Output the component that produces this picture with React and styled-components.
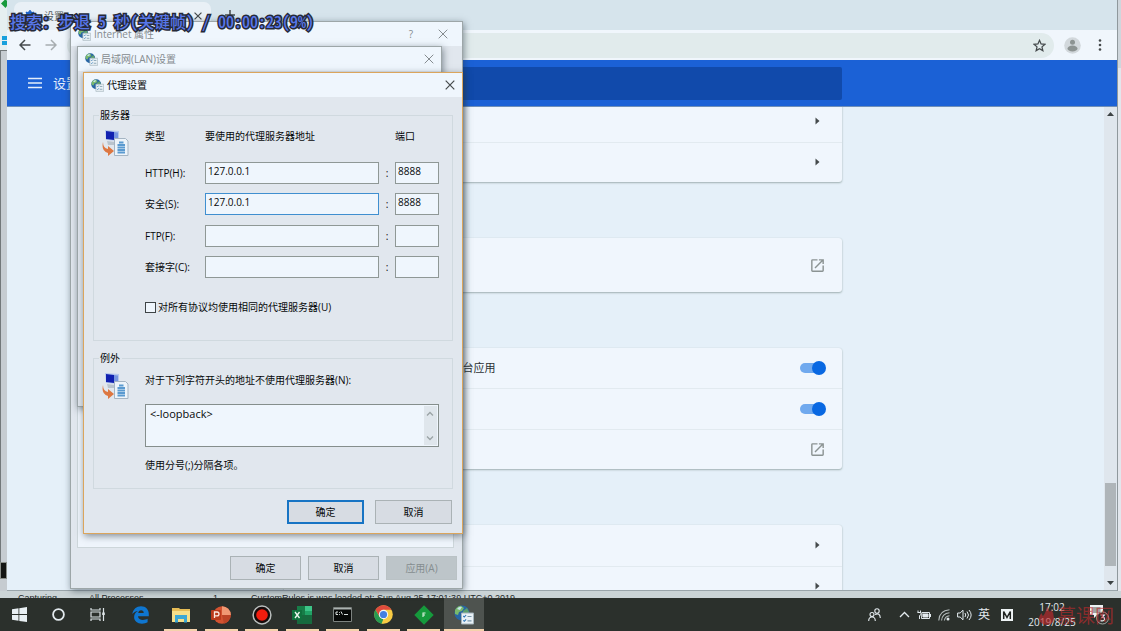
import React from "react";
import styled, { createGlobalStyle, css } from "styled-components";

const GlobalStyle = createGlobalStyle`
  *, *::before, *::after { box-sizing: border-box; }
  html, body { margin: 0; padding: 0; }
  body {
    font-family: "Open Sans", "Noto Sans CJK SC", sans-serif;
    font-size: 10px;
    line-height: 14px;
    color: #060809;
    overflow: hidden;
  }
  button, input, textarea { font: inherit; color: inherit; margin: 0; border-radius: 0; }
  button { padding: 0; border: 0; background: none; }
  svg { display: block; }
`;

/* ---------- desktop ---------- */

const Desktop = styled.div`
  position: relative;
  display: flex;
  flex-direction: column;
  height: 100vh;
  overflow: hidden;
  background: #c8d0d4;
`;

const Workspace = styled.div`
  flex: 1;
  min-height: 0;
  display: flex;
`;

const LeftEdge = styled.div`
  width: 7px;
  flex: none;
  display: flex;
  flex-direction: column;
  background: #c6ccd1;
  overflow: hidden;
`;

const LeftTop = styled.div`
  height: 51px;
  background: #e6eff0;
  border-bottom: 1px solid #72787a;
`;

const LeftMiddle = styled.div`
  flex: 1;
  border-left: 1px solid #72787a;
`;

const LeftBottom = styled.div`
  height: 17px;
  margin-bottom: 12px;
  background: #141614;
  border: 1px solid #8a8f8a;
`;

const RightEdge = styled.div`
  width: 4px;
  flex: none;
  background: linear-gradient(#cfd6dc 0 68px, #e2e6ec 68px);
  border-left: 1px solid #8f989c;
`;

const StatusBar = styled.div`
  display: grid;
  grid-template-columns: 14px 71px 124px 38px 1fr;
  align-items: end;
  height: 7px;
  padding: 0 0 3px 4px;
  overflow: hidden;
  background: #cbd4d6;
  font: 9px/14px "Liberation Sans", sans-serif;
  color: #24292a;
`;

/* ---------- browser ---------- */

const Browser = styled.main`
  flex: 1;
  min-width: 0;
  display: flex;
  flex-direction: column;
  background: #e5f0f9;
  border-bottom: 1px solid #9aa5aa;
`;

const TabStrip = styled.div`
  display: flex;
  align-items: flex-end;
  gap: 13px;
  height: 30px;
  flex: none;
  padding-left: 7px;
  background: #d6e4ec;
`;

const Tab = styled.div`
  display: flex;
  align-items: center;
  gap: 8px;
  width: 197px;
  height: 28px;
  padding: 0 8px 0 10px;
  border-radius: 7px 7px 0 0;
  background: #e9f0f6;
  color: #545b60;
`;

const TabTitle = styled.span`
  flex: 1;
`;

const PlainButton = styled.button`
  display: flex;
  align-items: center;
  justify-content: center;
  width: ${(p) => p.$w || 12}px;
  height: ${(p) => p.$h || 12}px;
  color: ${(p) => p.$color || "#454a4c"};
`;

const Toolbar = styled.div`
  display: flex;
  align-items: center;
  height: 30px;
  flex: none;
  padding: 0 4px 0 8px;
  gap: 6px;
  background: #f0f6fc;
`;

const Omnibox = styled.div`
  flex: 1;
  display: flex;
  align-items: center;
  justify-content: flex-end;
  height: 25px;
  margin-right: 4px;
  padding-right: 7px;
  border-radius: 13px;
  background: #e1ebec;
`;

const SettingsHeader = styled.header`
  display: grid;
  grid-template-columns: 1fr 558px 1fr;
  align-items: center;
  height: 47px;
  flex: none;
  padding-left: 2px;
  background: #1b61d6;
  border-bottom: 1px solid #6f8fb8;
`;

const HeaderTitle = styled.div`
  display: flex;
  align-items: center;
  gap: 11px;
  padding-left: 19px;
  color: #e4eefb;
  font-size: 13px;
  line-height: 18px;
`;

const SearchField = styled.input`
  width: 100%;
  height: 33px;
  border: 0;
  padding: 0 12px;
  border-radius: 2px;
  background: #114aab;
`;

const Page = styled.div`
  flex: 1;
  min-height: 0;
  display: flex;
`;

const PageContent = styled.div`
  flex: 1;
  display: flex;
  flex-direction: column;
  align-items: center;
  gap: 56px;
  padding-left: 14px;
  overflow: hidden;
`;

const Card = styled.section`
  display: grid;
  grid-auto-rows: 1fr;
  flex: none;
  width: 558px;
  height: ${(p) => p.$height}px;
  border-radius: 3px;
  background: #f0f6fd;
  box-shadow: 0 1px 2px #9fb0b2, 0 0 1px #c5d2d6;
  &:first-child { margin-top: -6px; }
`;

const CardRow = styled.div`
  display: flex;
  align-items: center;
  justify-content: flex-end;
  padding-right: ${(p) => (p.$icon ? 15 : 16)}px;
  color: #2c3134;
  font-size: 11px;
  & + & { border-top: 1px solid #e2eaf0; }
`;

const RowLabel = styled.label`
  width: 212px;
  margin-right: auto;
  text-align: right;
`;

const Switch = styled.input`
  appearance: none;
  position: relative;
  width: 26px;
  height: 14px;
  &::before {
    content: "";
    position: absolute;
    inset: 2px 4px 2px 0;
    border-radius: 5px;
    background: #70a9ee;
  }
  &::after {
    content: "";
    position: absolute;
    right: 0;
    top: 0;
    width: 14px;
    height: 14px;
    border-radius: 50%;
    background: #0968e2;
  }
`;

const ScrollTrack = styled.div`
  display: flex;
  flex-direction: column;
  align-items: center;
  width: 13px;
  padding: 5px 0;
  background: #dfe6ed;
  color: #3c4244;
`;

const ScrollSpace = styled.div`
  flex: 1;
`;

const ScrollThumb = styled.div`
  width: 11px;
  height: 83px;
  margin-bottom: 15px;
  background: #afb5b9;
`;

/* ---------- dialogs ---------- */

const Dialog = styled.section`
  position: absolute;
  display: flex;
  flex-direction: column;
  border: 1px solid #9da6a8;
  background: #e1e7ee;
  box-shadow: 1px 2px 7px rgba(40, 55, 65, 0.55);
`;

const InternetDialog = styled(Dialog)`
  left: 70px;
  top: 21px;
  width: 393px;
  height: 568px;
`;

const LanDialog = styled(Dialog)`
  left: 77px;
  top: 46px;
  width: 365px;
  height: 361px;
`;

const ProxyDialog = styled(Dialog)`
  left: 83px;
  top: 72px;
  width: 380px;
  border-color: #dba55c;
`;

const TitleBar = styled.header`
  display: flex;
  align-items: center;
  gap: 3px;
  height: 24px;
  flex: none;
  padding: 0 ${(p) => p.$right || 6}px 0 7px;
  background: #eff6fd;
  color: ${(p) => (p.$active ? "#060809" : "#858b8f")};
`;

const DialogTitle = styled.h2`
  flex: 1;
  margin: 0;
  font-size: 10px;
  font-weight: 400;
`;

const TabPanel = styled.div`
  flex: 1;
  margin: 40px 8px 0 6px;
  border: 1px solid #cdd6da;
  background: #eff5fc;
`;

const ButtonRow = styled.footer`
  display: flex;
  justify-content: flex-end;
  gap: ${(p) => p.$gap}px;
  padding: ${(p) => p.$padding};
`;

const DialogButton = styled.button`
  width: ${(p) => p.$width}px;
  height: 24px;
  border: 1px solid #aab2b5;
  background: #d7dce3;
  text-align: center;
  ${(p) => p.$primary && css`border: 2px solid #1774c4;`}
  &:disabled {
    border-color: #bac2c5;
    background: #bdc5c9;
    color: #858d8f;
  }
`;

const ProxyBody = styled.form`
  display: flex;
  flex-direction: column;
  padding: 11px 9px 0;
`;

const Group = styled.fieldset`
  display: grid;
  grid-template-columns: 46px 1fr;
  align-content: start;
  min-width: 0;
  height: ${(p) => p.$height}px;
  margin: 0 0 10px;
  padding: 0 13px 0 5px;
  border: 1px solid #d0d9df;
`;

const Legend = styled.legend`
  padding: 0 2px 0 1px;
`;

const IconCell = styled.div`
  padding: 7px 0 0 3px;
`;

const GroupContent = styled.div`
  display: flex;
  flex-direction: column;
  padding-top: ${(p) => p.$top}px;
`;

const ServerGrid = styled.div`
  display: grid;
  grid-template-columns: 60px 174px 16px 44px;
  align-items: center;
  align-content: space-between;
  height: ${(p) => p.$height}px;
`;

const Colon = styled.span`
  text-align: center;
`;

const TextField = styled.input`
  width: 100%;
  height: 22px;
  min-width: 0;
  padding: 0 3px 4px 2px;
  border: 1px solid #8f9896;
  background: #eff6fd;
  outline: 0;
  ${(p) => p.$focused && css`border-color: #3f8fd0;`}
`;

const CheckLabel = styled.label`
  display: flex;
  align-items: center;
  gap: 2px;
  margin-top: 22px;
`;

const CheckBox = styled.input`
  appearance: none;
  width: 11px;
  height: 11px;
  border: 1px solid #3e4446;
  background: #eff6fd;
`;

const BypassBox = styled.div`
  display: flex;
  height: 43px;
  margin: 17px 0 11px;
  border: 1px solid #858e8c;
  background: #eff6fd;
`;

const BypassText = styled.textarea`
  flex: 1;
  min-width: 0;
  padding: 2px 4px;
  border: 0;
  outline: 0;
  resize: none;
  overflow: hidden;
  background: none;
  font-size: 11px;
`;

const BypassScroll = styled.div`
  display: flex;
  flex-direction: column;
  justify-content: space-between;
  width: 13px;
  margin: 1px;
  background: #dfe6ec;
`;

/* ---------- taskbar ---------- */

const Taskbar = styled.nav`
  display: flex;
  align-items: stretch;
  height: 33px;
  flex: none;
  background: #2b302c;
  color: #e3eaee;
`;

const SystemButtons = styled.div`
  display: flex;
  margin-right: 3px;
`;

const AppButtons = styled.div`
  display: flex;
  justify-content: space-between;
  width: 364px;
`;

const TaskButton = styled.button`
  display: flex;
  align-items: center;
  justify-content: center;
  width: ${(p) => p.$width || 40}px;
  background: ${(p) => (p.$active ? "#4e534f" : "none")};
  ${(p) => p.$running && css`
    background-image: linear-gradient(#f4d2ac, #f4d2ac);
    background-repeat: no-repeat;
    background-position: center bottom;
    background-size: ${p.$active ? "40px" : "33px"} 2px;
  `}
`;

const Tray = styled.div`
  display: flex;
  align-items: center;
  margin-left: auto;
  padding-right: 7px;
`;

const TrayButton = styled.button`
  display: flex;
  align-items: center;
  justify-content: center;
  width: ${(p) => p.$width || 20}px;
  height: 33px;
  color: #e3eaee;
  font-size: 12px;
`;

const Clock = styled.time`
  width: 64px;
  text-align: center;
  line-height: 15px;
`;

const Watermark = styled.div`
  position: absolute;
  right: 7px;
  bottom: 4px;
  display: flex;
  align-items: center;
  gap: 3px;
  color: rgba(190, 42, 44, 0.65);
  font: 19px/24px "Noto Sans CJK SC", sans-serif;
`;

const PlayerMessage = styled.div`
  position: absolute;
  left: 10px;
  top: 9px;
  font: 500 16px/24px "Noto Sans CJK SC", sans-serif;
  font-feature-settings: "hwid";
  white-space: pre;
  color: #5877ea;
  -webkit-text-stroke: 3px #262a38;
  paint-order: stroke fill;
`;

/* ---------- drawings ---------- */

const CloseIcon = ({ size = 10, width = 1 }) => (
  <svg width={size} height={size} viewBox="0 0 10 10" fill="none" stroke="currentColor" strokeWidth={width}>
    <path d="M.7.7l8.6 8.6M9.3.7L.7 9.3" />
  </svg>
);

const GlobeIcon = ({ size = 13 }) => (
  <svg width={size} height={size} viewBox="0 0 20 20">
    <circle cx="8" cy="8" r="7.6" fill="#2866a4" />
    <path d="M1 5Q3 1 7 .8L10 3 8 6 5 7 4 10 1 9z" fill="#79b96b" />
    <path d="M9 6l4-3 2 4-3 5-3-2z" fill="#5b9f6d" />
    <path d="M3 4q2-3 5-2l-2 3z" fill="#c5e3ec" />
    <path d="M7.500 8h12v11h-12z" fill="#e9f1f6" stroke="#a3b2ba" strokeWidth="1" />
    <path d="M9.300 11l1 1 1.800-2M9.300 15.300l1 1 1.800-2" fill="none" stroke="#2873b5" strokeWidth="1.100" />
    <path d="M13.500 11.500h4M13.500 15.800h4" stroke="#7896a9" strokeWidth="1.200" />
  </svg>
);

const ServerIcon = () => (
  <svg width="27" height="28" viewBox="0 0 27 28">
    <path d="M3 1l14 1v10L4 11z" fill="#b5c8ed" />
    <path d="M4 2l8 1v8l-8-1z" fill="#1020b0" />
    <path d="M12 3l4 .5v7.500l-4-1z" fill="#7796e0" />
    <path d="M5 12l8 1v3H6z" fill="#b9c4ce" />
    <path d="M12.500 9.500h11l2.500 2.500v14.500h-13.500z" fill="#edf4fa" stroke="#a5b5c3" />
    <path d="M17 13.500h4.500M15.500 16h7.500M15.500 18.500h7.500M15.500 21h7.500M15.500 23.500h7.500" stroke="#5a9ad0" strokeWidth="1.800" />
    <path d="M1 13q0 6 5 7v-3l6 5-6 5v-3Q-1 22 1 13z" fill="#dd7741" />
  </svg>
);

const Triangle = ({ d, w = 7, h = 7 }) => (
  <svg width={w} height={h} viewBox={`0 0 ${w} ${h}`} fill="currentColor"><path d={d} /></svg>
);

const ArrowRight = () => <Triangle w={5} h={8} d="M.5.5L4.500 4 .5 7.500z" />;

const LaunchIcon = () => (
  <svg width="17" height="17" viewBox="0 0 24 24" fill="#8b9393">
    <path d="M19 19H5V5h7V3H5a2 2 0 0 0-2 2v14a2 2 0 0 0 2 2h14a2 2 0 0 0 2-2v-7h-2v7zM14 3v2h3.590l-9.830 9.830 1.410 1.410L19 6.410V10h2V3h-7z" />
  </svg>
);

const NavArrow = ({ back }) => (
  <svg width="12" height="12" viewBox="0 0 12 12" fill="none" stroke="currentColor" strokeWidth="1.500">
    <path d={back ? "M11.500 6H1M6 1L1 6l5 5" : "M.5 6H11M6 1l5 5-5 5"} />
  </svg>
);

const Chevron = ({ up }) => (
  <svg width="8" height="6" viewBox="0 0 8 6" fill="none" stroke="#9aa3a5" strokeWidth="1.300">
    <path d={up ? "M1 4.500l3-3 3 3" : "M1 1.500l3 3 3-3"} />
  </svg>
);

const WindowsIcon = () => (
  <svg width="15" height="15" viewBox="0 0 15 15" fill="#e8eff3">
    <path d="M0 2.200l6.500-.9v5.800H0zM7.300 1.200L15 0v7.100H7.300zM0 7.900h6.500v5.800L0 12.800zM7.300 7.900H15V15l-7.700-1.100z" />
  </svg>
);

const TaskViewIcon = () => (
  <svg width="15" height="15" viewBox="0 0 15 15" fill="none" stroke="#dce3e6" strokeWidth="1.200">
    <path d="M1 1v2h9V1M1 14v-2h9v2M1 5h9v5H1zM13.500 1v13" />
    <path d="M12.200 5.500h2.600v2.500h-2.600z" fill="#dce3e6" stroke="none" />
  </svg>
);

const EdgeIcon = () => (
  <svg width="17" height="18" viewBox="0 0 17 18">
    <path d="M.3 8C1.200 3 4.400.2 9 .2c5 0 7.800 3.500 7.800 7.600v2.400H6c.2 2.600 2.300 3.700 4.900 3.700 1.800 0 3.500-.5 4.700-1.200v3.600c-1.500.9-3.400 1.400-5.600 1.400-4.800 0-7.900-2.800-7.900-6.700 0-2.700 1.400-4.900 3.900-6.100C3.600 5.200 1.600 6.200.3 8zm5.900-1h5.500c0-1.800-.9-2.800-2.600-2.800S6.500 5.400 6.200 7z" fill="#0f76d0" />
  </svg>
);

const FolderIcon = () => (
  <svg width="18" height="16" viewBox="0 0 18 16">
    <path d="M0 1h7l1 1h10v13H0z" fill="#e7bd56" />
    <path d="M0 4h18v11H0z" fill="#f6df8a" />
    <path d="M3 8h12v7.500h-3V12H6v3.500H3z" fill="#3ca8d5" />
  </svg>
);

const PowerPointIcon = () => (
  <svg width="20" height="18" viewBox="0 0 20 18">
    <circle cx="11" cy="9" r="8.800" fill="#d35230" />
    <path d="M11 .2A8.800 8.800 0 0 1 19.800 9H11z" fill="#f19873" />
    <path d="M11 9h8.800A8.800 8.800 0 0 1 13 17.500z" fill="#bd4527" />
    <rect x="0" y="4" width="10" height="10" rx="1" fill="#b93a1c" />
    <path d="M3.500 12V6H6q2 0 2 1.900T6 9.800H3.600" fill="none" stroke="#fbe9e2" strokeWidth="1.300" />
  </svg>
);

const RecordIcon = () => (
  <svg width="20" height="20" viewBox="0 0 20 20">
    <circle cx="10" cy="10" r="8.900" fill="#160c0c" stroke="#b9bebd" strokeWidth="1.500" />
    <circle cx="10" cy="10" r="5.800" fill="#f31d0e" />
  </svg>
);

const ExcelIcon = () => (
  <svg width="20" height="18" viewBox="0 0 20 18">
    <path d="M5 0h15v18H5z" fill="#21a366" />
    <path d="M5 0h8v9H5z" fill="#177d48" />
    <path d="M13 0h7v5h-7z" fill="#3dc588" />
    <path d="M5 9h15v9H5z" fill="#176a3e" />
    <path d="M0 4h10v10H0z" fill="#0f713d" />
    <path d="M3 6l4.500 6M7.500 6L3 12" stroke="#edf8f0" strokeWidth="1.300" />
  </svg>
);

const ConsoleIcon = () => (
  <svg width="19" height="15" viewBox="0 0 19 15">
    <path d="M.5.5h18v14H.5z" fill="#070907" stroke="#7d8380" />
    <path d="M1 1h17v1.500H1z" fill="#aab2b0" />
    <path d="M3 5h2M3 5v2.500h2M6.500 5v.8M6.500 7v.8M8 4.500l1.500 3M11 7.500h4" stroke="#dbe2e0" fill="none" />
  </svg>
);

const ChromeIcon = () => (
  <svg width="19" height="19" viewBox="0 0 20 20">
    <circle cx="10" cy="10" r="9.800" fill="#f8cb43" />
    <path d="M1.500 5.100A9.800 9.800 0 0 1 18.500 5.100H10L5.800 12.400z" fill="#df4b3d" />
    <path d="M1.500 5.100L5.800 12.400 10 14.900 9.500 19.800A9.800 9.800 0 0 1 1.500 5.100z" fill="#279b52" />
    <path d="M14.200 12.400L9.500 19.800l-1.500-.2 2-5z" fill="#f8cb43" />
    <circle cx="10" cy="10" r="4.900" fill="#f2f7fb" />
    <circle cx="10" cy="10" r="3.800" fill="#447fe2" />
  </svg>
);

const FiddlerIcon = () => (
  <svg width="20" height="20" viewBox="0 0 20 20">
    <path d="M10 .3L19.700 10 10 19.700.3 10z" fill="#169a3c" />
    <path d="M9 12v-4h2.500M9 10h2" fill="none" stroke="#dbf1de" strokeWidth="1.100" />
  </svg>
);

const PeopleIcon = () => (
  <svg width="13" height="14" viewBox="0 0 13 14" fill="none" stroke="currentColor" strokeWidth="1.100">
    <circle cx="4" cy="6.500" r="2" /><path d="M.7 13q0-4 3.300-4t3.300 4" />
    <circle cx="9" cy="3" r="2.200" /><path d="M7 6.500q5-2.300 5.300 3.500" />
  </svg>
);

const TrayChevron = () => (
  <svg width="11" height="7" viewBox="0 0 11 7" fill="none" stroke="currentColor" strokeWidth="1.300"><path d="M1 6l4.500-4.500L10 6" /></svg>
);

const BatteryIcon = () => (
  <svg width="14" height="10" viewBox="0 0 14 10" fill="none" stroke="currentColor">
    <path d="M1 .5v2M3.500.5v2M.5 2.500H4v1.500Q4 5.500 2.500 5.500V9" />
    <path d="M5 2.500h7.500v6h-8zM13.500 4v3" />
    <path d="M6 4h5v3H6z" fill="currentColor" />
  </svg>
);

const WifiIcon = () => (
  <svg width="12" height="12" viewBox="0 0 12 12" fill="none" stroke="#b5bdbd" strokeWidth="1.100">
    <path d="M.8 11.500Q1.200 1.500 11.500.8M3.600 11.500Q4 4.500 11.500 3.700M6.400 11.500Q7 7.200 11.500 6.700" />
    <circle cx="10" cy="10" r="1.500" fill="#e3eaee" stroke="none" />
  </svg>
);

const SpeakerIcon = () => (
  <svg width="15" height="12" viewBox="0 0 15 12" fill="none" stroke="currentColor">
    <path d="M.6 4h2.500L6 1.200v9.600L3.100 8H.6zM8 4q1.500 2 0 4M10 2.500q3 3.500 0 7M12 1q4.300 5 0 10" />
  </svg>
);

const ImeIcon = () => (
  <svg width="12" height="12" viewBox="0 0 12 12">
    <path d="M0 0h12v12H0z" fill="#eef3f5" />
    <path d="M2.700 10V2.500L6 8.500l3.300-6V10" fill="none" stroke="#1e2220" strokeWidth="1.500" />
  </svg>
);

const ActionIcon = () => (
  <svg width="19" height="21" viewBox="0 0 19 21">
    <path d="M0 1h13v10H7l-3 3v-3H0z" fill="#eef3f5" />
    <path d="M2.500 4h8M2.500 6h8M2.500 8h8" stroke="#4b504d" />
    <circle cx="12.500" cy="14" r="6" fill="#2e322f" stroke="#a6aaa5" />
    <path d="M10.500 11h3.800l-2 2.300q2.400 0 2.200 2-.5 2.200-4 1.300" fill="none" stroke="#eef3f5" strokeWidth="1.200" />
  </svg>
);

const FlameIcon = () => (
  <svg width="15" height="19" viewBox="0 0 15 19" fill="currentColor">
    <path d="M8 0q1 4 3 6 1-1 1-3 3 4 3 9 0 6-7 7-8-1-8-7 0-3 3-5 0 3 1 3Q7 7 8 0z" />
  </svg>
);

/* ---------- parts ---------- */

const SERVERS = [
  { id: "http", label: "HTTP(H):", address: "127.0.0.1", port: "8888" },
  { id: "secure", label: "安全(S):", address: "127.0.0.1", port: "8888", focused: true },
  { id: "ftp", label: "FTP(F):", address: "", port: "" },
  { id: "socks", label: "套接字(C):", address: "", port: "" },
];

const APPS = [
  ["Edge", EdgeIcon, false],
  ["文件资源管理器", FolderIcon, true],
  ["PowerPoint", PowerPointIcon, true],
  ["录制", RecordIcon, true],
  ["Excel", ExcelIcon, true],
  ["命令提示符", ConsoleIcon, true],
  ["Chrome", ChromeIcon, true],
  ["Fiddler", FiddlerIcon, true],
];

const BrowserWindow = () => (
  <Browser>
    <TabStrip>
      <Tab>
        <svg width="12" height="12" viewBox="0 0 12 12">
          <circle cx="6" cy="6" r="3.500" fill="none" stroke="#1b61c8" strokeWidth="2.500" />
          <path d="M6 0v12M0 6h12M2 2l8 8M10 2l-8 8" stroke="#1b61c8" strokeWidth="1.500" />
        </svg>
        <TabTitle>设置</TabTitle>
        <PlainButton aria-label="关闭标签页" $w={10}><CloseIcon size={8} width={1.5} /></PlainButton>
      </Tab>
      <PlainButton aria-label="新标签页" $h={30}>
        <svg width="10" height="10" viewBox="0 0 10 10" stroke="currentColor" strokeWidth="1.500"><path d="M5 0v10M0 5h10" /></svg>
      </PlainButton>
    </TabStrip>
    <Toolbar>
      <PlainButton aria-label="后退" $w={20} $h={20}><NavArrow back /></PlainButton>
      <PlainButton aria-label="前进" $w={20} $h={20} $color="#a7adb0"><NavArrow /></PlainButton>
      <Omnibox>
        <PlainButton aria-label="收藏" $w={16} $h={16}>
          <svg width="13" height="13" viewBox="0 0 24 24" fill="none" stroke="currentColor" strokeWidth="2.300">
            <path d="M12 2.500l2.900 6.700 7.100.6-5.400 4.700 1.600 7-6.200-3.700-6.200 3.700 1.600-7L2 9.800l7.100-.6z" />
          </svg>
        </PlainButton>
      </Omnibox>
      <PlainButton aria-label="用户" $w={17} $h={17}>
        <svg width="17" height="17" viewBox="0 0 17 17">
          <circle cx="8.500" cy="8.500" r="8.300" fill="#d2d8dc" />
          <g fill="#8d9493"><circle cx="8.500" cy="5.300" r="2.500" /><ellipse cx="8.500" cy="11.500" rx="5" ry="3" /></g>
        </svg>
      </PlainButton>
      <PlainButton aria-label="菜单" $w={26} $h={17}>
        <svg width="4" height="12" viewBox="0 0 4 12" fill="currentColor"><circle cx="2" cy="1.500" r="1.300" /><circle cx="2" cy="6" r="1.300" /><circle cx="2" cy="10.500" r="1.300" /></svg>
      </PlainButton>
    </Toolbar>
    <SettingsHeader>
      <HeaderTitle>
        <PlainButton aria-label="主菜单" $w={14} $color="#e4eefb">
          <svg width="14" height="12" viewBox="0 0 14 12" stroke="currentColor" strokeWidth="1.600"><path d="M0 1.500h14M0 6h14M0 10.500h14" /></svg>
        </PlainButton>
        设置
      </HeaderTitle>
      <SearchField type="search" aria-label="在设置中搜索" />
    </SettingsHeader>
    <Page>
      <PageContent>
        <Card $height={81}>
          <CardRow $icon><PlainButton aria-label="展开" $w={18}><ArrowRight /></PlainButton></CardRow>
          <CardRow $icon><PlainButton aria-label="展开" $w={18}><ArrowRight /></PlainButton></CardRow>
        </Card>
        <Card $height={54}>
          <CardRow $icon><PlainButton aria-label="打开" $w={18}><LaunchIcon /></PlainButton></CardRow>
        </Card>
        <Card $height={121}>
          <CardRow>
            <RowLabel htmlFor="background-apps">台应用</RowLabel>
            <Switch id="background-apps" type="checkbox" role="switch" defaultChecked />
          </CardRow>
          <CardRow><Switch type="checkbox" role="switch" aria-label="硬件加速" defaultChecked /></CardRow>
          <CardRow $icon><PlainButton aria-label="打开" $w={18}><LaunchIcon /></PlainButton></CardRow>
        </Card>
        <Card $height={81}>
          <CardRow $icon><PlainButton aria-label="展开" $w={18}><ArrowRight /></PlainButton></CardRow>
          <CardRow $icon><PlainButton aria-label="展开" $w={18}><ArrowRight /></PlainButton></CardRow>
        </Card>
      </PageContent>
      <ScrollTrack>
        <Triangle h={4} d="M0 4L3.500 0 7 4z" />
        <ScrollSpace />
        <ScrollThumb />
        <Triangle h={4} d="M0 0h7L3.500 4z" />
      </ScrollTrack>
    </Page>
  </Browser>
);

const ProxySettings = () => (
  <ProxyDialog aria-label="代理设置">
    <TitleBar $active>
      <GlobeIcon />
      <DialogTitle>代理设置</DialogTitle>
      <PlainButton aria-label="关闭"><CloseIcon width={1.2} /></PlainButton>
    </TitleBar>
    <ProxyBody>
      <Group $height={233}>
        <Legend>服务器</Legend>
        <IconCell><ServerIcon /></IconCell>
        <GroupContent $top={7}>
          <ServerGrid $height={14}>
            <span>类型</span>
            <span>要使用的代理服务器地址</span>
            <span />
            <span>端口</span>
          </ServerGrid>
          <GroupContent $top={19}>
            <ServerGrid $height={116}>
              {SERVERS.map((s) => (
                <React.Fragment key={s.id}>
                  <label htmlFor={s.id}>{s.label}</label>
                  <TextField id={s.id} defaultValue={s.address} $focused={s.focused} />
                  <Colon>:</Colon>
                  <TextField aria-label={`${s.label} 端口`} defaultValue={s.port} />
                </React.Fragment>
              ))}
            </ServerGrid>
          </GroupContent>
          <CheckLabel>
            <CheckBox type="checkbox" />
            对所有协议均使用相同的代理服务器(U)
          </CheckLabel>
        </GroupContent>
      </Group>
      <Group $height={138}>
        <Legend>例外</Legend>
        <IconCell><ServerIcon /></IconCell>
        <GroupContent $top={8}>
          <label htmlFor="bypass">对于下列字符开头的地址不使用代理服务器(N):</label>
          <BypassBox>
            <BypassText id="bypass" defaultValue="<-loopback>" />
            <BypassScroll>
              <PlainButton type="button" aria-label="向上" $h={16}><Chevron up /></PlainButton>
              <PlainButton type="button" aria-label="向下" $h={14}><Chevron /></PlainButton>
            </BypassScroll>
          </BypassBox>
          <span>使用分号(;)分隔各项。</span>
        </GroupContent>
      </Group>
    </ProxyBody>
    <ButtonRow $gap={11} $padding="1px 10px 9px">
      <DialogButton $width={77} $primary>确定</DialogButton>
      <DialogButton $width={77}>取消</DialogButton>
    </ButtonRow>
  </ProxyDialog>
);

export default function App() {
  return (
    <Desktop>
      <GlobalStyle />
      <Workspace>
        <LeftEdge>
          <LeftTop>
            <svg width="7" height="50" viewBox="0 0 7 50">
              <path d="M1 3.500L5.500-1 9 3.500 5.500 8z" fill="#189a3c" />
              <path d="M2 36h5v4H2zM2 41h5v4H2z" fill="#18a0dc" />
            </svg>
          </LeftTop>
          <LeftMiddle />
          <LeftBottom />
        </LeftEdge>
        <BrowserWindow />
        <RightEdge />
      </Workspace>
      <StatusBar>
        <span />
        <span>Capturing</span>
        <span>All Processes</span>
        <span>1</span>
        <span>CustomRules.js was loaded at: Sun Aug 25 17:01:39 UTC+0 2019</span>
      </StatusBar>

      <InternetDialog aria-label="Internet 属性">
        <TitleBar $right={12}>
          <GlobeIcon />
          <DialogTitle>Internet 属性</DialogTitle>
          <PlainButton aria-label="帮助" $w={44} $color="#858b8f">?</PlainButton>
          <PlainButton aria-label="关闭" $color="#858b8f" $w={14}><CloseIcon /></PlainButton>
        </TitleBar>
        <TabPanel />
        <ButtonRow $gap={7} $padding="8px 5px 8px">
          <DialogButton $width={71}>确定</DialogButton>
          <DialogButton $width={71}>取消</DialogButton>
          <DialogButton $width={71} disabled>应用(A)</DialogButton>
        </ButtonRow>
      </InternetDialog>

      <LanDialog aria-label="局域网(LAN)设置">
        <TitleBar>
          <GlobeIcon />
          <DialogTitle>局域网(LAN)设置</DialogTitle>
          <PlainButton aria-label="关闭" $color="#858b8f"><CloseIcon /></PlainButton>
        </TitleBar>
      </LanDialog>

      <ProxySettings />

      <Taskbar>
        <SystemButtons>
          <TaskButton aria-label="开始" $width={39}><WindowsIcon /></TaskButton>
          <TaskButton aria-label="Cortana" $width={39}>
            <svg width="13" height="13" viewBox="0 0 13 13"><circle cx="6.500" cy="6.500" r="5.400" fill="none" stroke="#e3eaee" strokeWidth="1.800" /></svg>
          </TaskButton>
          <TaskButton aria-label="任务视图" $width={39}><TaskViewIcon /></TaskButton>
        </SystemButtons>
        <AppButtons>
          {APPS.map(([name, Icon, running]) => (
            <TaskButton key={name} aria-label={name} $running={running}><Icon /></TaskButton>
          ))}
          <TaskButton aria-label="Internet 属性" $running $active><GlobeIcon size={20} /></TaskButton>
        </AppButtons>
        <Tray>
          <TrayButton aria-label="人脉" $width={40}><PeopleIcon /></TrayButton>
          <TrayButton aria-label="显示隐藏的图标"><TrayChevron /></TrayButton>
          <TrayButton aria-label="电池"><BatteryIcon /></TrayButton>
          <TrayButton aria-label="网络"><WifiIcon /></TrayButton>
          <TrayButton aria-label="音量"><SpeakerIcon /></TrayButton>
          <TrayButton aria-label="输入法">英</TrayButton>
          <TrayButton aria-label="微软拼音" $width={26}><ImeIcon /></TrayButton>
          <Clock>17:02<br />2019/8/25</Clock>
          <TrayButton aria-label="通知" $width={30}><ActionIcon /></TrayButton>
        </Tray>
      </Taskbar>

      <Watermark><FlameIcon />慕课网</Watermark>
      <PlayerMessage>搜索：步退 5 秒(关键帧) / 00:00:23(9%)</PlayerMessage>
    </Desktop>
  );
}
